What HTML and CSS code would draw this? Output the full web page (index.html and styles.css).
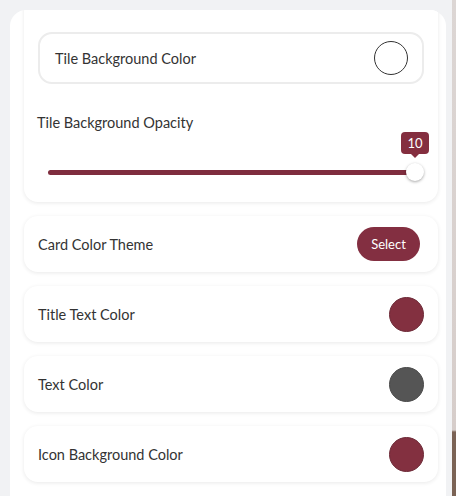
FILE: index.html
```html
<!DOCTYPE html>
<html lang="en">
<head>
  <meta charset="UTF-8" />
  <title>Tile Settings</title>
  <link rel="stylesheet" href="styles.css">
</head>
<body>

<div class="panel">
  <section class="card group">
    <div class="row boxed">
      <span>Tile Background Color</span>
      <span class="swatch outline"></span>
    </div>
    <p class="label">Tile Background Opacity</p>
    <div class="slider">
      <div class="track"></div>
      <div class="thumb"></div>
      <div class="bubble">10</div>
    </div>
  </section>

  <section class="card row">
    <span>Card Color Theme</span>
    <button class="btn">Select</button>
  </section>

  <section class="card row">
    <span>Title Text Color</span>
    <span class="swatch wine"></span>
  </section>

  <section class="card row">
    <span>Text Color</span>
    <span class="swatch grey"></span>
  </section>

  <section class="card row">
    <span>Icon Background Color</span>
    <span class="swatch wine"></span>
  </section>
</div>

<div class="edge"></div>

</body>
</html>
```

FILE: styles.css
```css
body {
  font-family: Lato, "Noto Sans", sans-serif;
  font-size: 14.5px;
  color: #333;
  background: #f1f2f4;
  margin: 0;
  padding: 10px 0 0 10px;
  display: flex;
  height: 486px;
  overflow: hidden;
}
.panel {
  width: 436px;
  flex-shrink: 0;
  background: white;
  border-radius: 16px 16px 0 0;
  padding: 0 8px 0 14px;
  box-sizing: border-box;
  overflow: hidden;
  display: flex;
  flex-direction: column;
  gap: 14px;
}
.edge {
  width: 4px;
  margin-left: 6px;
  margin-top: -10px;
  height: 496px;
  background: linear-gradient(#dcd6d4 0, #d6cdca 430px, #7b6355 432px);
}
.card {
  background: white;
  border-radius: 14px;
  box-shadow: 0 1px 4px rgba(0,0,0,0.09);
  flex-shrink: 0;
}
.row {
  display: flex;
  align-items: center;
  justify-content: space-between;
  height: 56px;
  padding: 0 14px;
  box-sizing: border-box;
}
.group {
  margin-top: -20px;
  padding: 42px 14px 0 14px;
  height: 212px;
  box-sizing: border-box;
}
.boxed {
  height: 52px;
  border: 2px solid #ececec;
  border-radius: 14px;
  padding: 0 14px 0 15px;
}
.label {
  margin: 29px 0 0 -1px;
  line-height: 20px;
}
.slider {
  position: relative;
  padding-top: 37px;
  height: 23px;
  margin: 0 10px;
}
.track {
  height: 5px;
  background: #7f2d3e;
  border-radius: 3px;
}
.thumb {
  position: absolute;
  right: -10px;
  top: 30px;
  width: 18px;
  height: 18px;
  border-radius: 50%;
  background: white;
  box-shadow: 0 1px 3px rgba(0,0,0,0.35);
}
.bubble {
  position: absolute;
  right: -15px;
  top: -1px;
  width: 28px;
  height: 22px;
  line-height: 22px;
  text-align: center;
  color: white;
  font-size: 13px;
  background: #842e3f;
  border-radius: 4px;
}
.bubble::after {
  content: "";
  position: absolute;
  left: 10px;
  top: 22px;
  border: 4px solid transparent;
  border-top-color: #842e3f;
}
.swatch {
  width: 35px;
  height: 35px;
  border-radius: 50%;
  box-sizing: border-box;
}
.outline {
  border: 1px solid #333;
  width: 34px;
  height: 34px;
}
.wine {
  background: #833040;
  border: 1px solid #6d2a37;
}
.grey {
  background: #555;
  border: 1px solid #4a4a4a;
}
.btn {
  font-family: inherit;
  font-size: 13px;
  background: #832f41;
  color: white;
  border: none;
  border-radius: 17px;
  height: 34px;
  width: 63px;
  margin-right: 4px;
}
```
